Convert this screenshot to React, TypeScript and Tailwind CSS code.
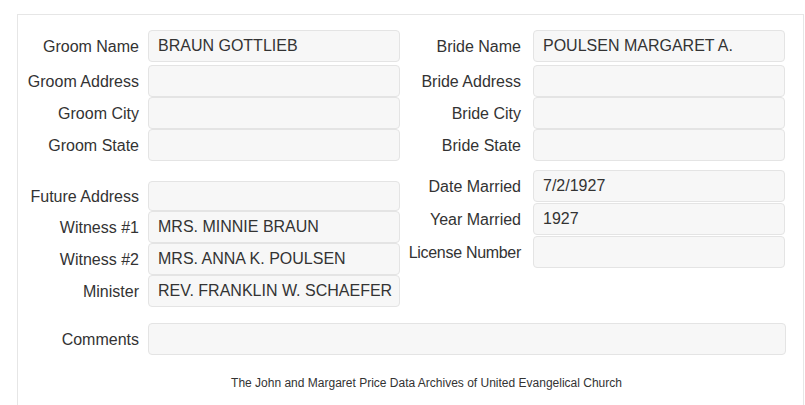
type FieldProps = {
  label: string;
  value?: string;
  side: "left" | "right";
  className?: string;
  short?: boolean;
};

const Field = ({ label, value, side, className = "", short = false }: FieldProps) => (
  <div className={`flex items-center ${short ? "h-[30px]" : "h-8"} ${className}`}>
    <label
      className={`shrink-0 text-right whitespace-nowrap pt-[1px] ${
        side === "left" ? "w-[130px] pr-[9px]" : "w-[132px] pr-[12px]"
      }`}
    >
      {label}
    </label>
    <div
      className={`w-[252px] ${
        short ? "h-[30px]" : "h-8"
      } flex items-center pl-[9px] bg-[#f7f7f7] border border-[#e4e4e4] rounded-[4px] whitespace-nowrap overflow-hidden`}
    >
      {value}
    </div>
  </div>
);

export default function App() {
  return (
    <div className="h-[405px] overflow-hidden bg-white font-['Liberation_Sans',Arial,sans-serif] text-[16px] text-[#333] pt-[14px] pl-[17px]">
      <div className="w-[787px] h-[420px] border border-[#e6e6e6] pt-[15px]">
        <div className="flex">
          <div className="w-[383px]">
            <Field side="left" label="Groom Name" value="BRAUN GOTTLIEB" className="mb-[3px]" />
            <Field side="left" label="Groom Address" />
            <Field side="left" label="Groom City" />
            <Field side="left" label="Groom State" />

            <div className="mt-[20px]">
              <Field side="left" label="Future Address" short />
              <Field side="left" label="Witness #1" value="MRS. MINNIE BRAUN" />
              <Field side="left" label="Witness #2" value="MRS. ANNA K. POULSEN" />
              <Field side="left" label="Minister" value="REV. FRANKLIN W. SCHAEFER" />
            </div>
          </div>

          <div className="w-[385px]">
            <Field side="right" label="Bride Name" value="POULSEN MARGARET A." className="mb-[3px]" />
            <Field side="right" label="Bride Address" />
            <Field side="right" label="Bride City" />
            <Field side="right" label="Bride State" />

            <div className="mt-[9px] flex flex-col gap-[1px]">
              <Field side="right" label="Date Married" value="7/2/1927" />
              <Field side="right" label="Year Married" value="1927" />
              <Field side="right" label="License Number" className="tracking-[-0.3px]" />
            </div>
          </div>
        </div>

        <div className="flex items-center h-8 mt-[16px]">
          <label className="w-[130px] pr-[9px] pt-[1px] text-right shrink-0">Comments</label>
          <div className="w-[638px] h-8 bg-[#f7f7f7] border border-[#e4e4e4] rounded-[4px]" />
        </div>

        <p className="mt-[21px] pl-[32px] text-center text-[12px] leading-[14px]">
          The John and Margaret Price Data Archives of United Evangelical Church
        </p>
      </div>
    </div>
  );
}
